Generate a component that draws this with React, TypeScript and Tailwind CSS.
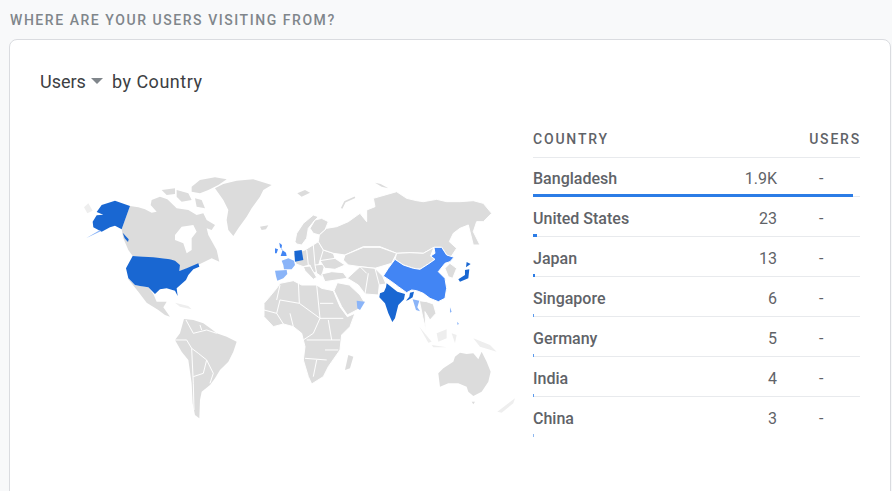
const rows = [
  { name: "Bangladesh", value: "1.9K", bar: "w-[320px] bg-[#2b7ce6]" },
  { name: "United States", value: "23", bar: "w-[4px] bg-[#2b7ce6]" },
  { name: "Japan", value: "13", bar: "w-[2px] bg-[#2b7ce6]" },
  { name: "Singapore", value: "6", bar: "w-[1px] bg-[#5b9bee]" },
  { name: "Germany", value: "5", bar: "w-[1px] bg-[#5b9bee]" },
  { name: "India", value: "4", bar: "w-[1px] bg-[#5b9bee]" },
  { name: "China", value: "3", bar: "w-[1px] bg-[#8fb9f0]" },
];

const gray = "#dcdcdc";
const pale = "#eeeeee";
const dark = "#1967d2";
const mid = "#4285f4";
const light = "#8ab4f8";

const WorldMap = () => (
  <svg width="490" height="270" viewBox="30 160 490 270" className="block">
    {/* americas: coords are in 3x space, origin 60,170 */}
    <g transform="translate(60 170) scale(0.3333)" stroke="#fff" strokeWidth="3" strokeLinejoin="round">
      <path fill={pale} stroke="none" d="M72 112L85 100L98 122L82 130Z" />
      <path fill={gray} stroke="none" d="M210 108L235 112L255 118L275 128L290 125L272 105L275 90L300 80L322 88L350 115L385 120L410 135L430 130L440 150L465 165L455 180L440 175L445 195L470 240L478 275L455 265L420 282L358 303L360 285L330 268L218 258L205 240L190 205L185 178Z" />
      <path fill={gray} stroke="none" d="M305 60L345 55L345 72L320 75ZM395 50L420 30L465 22L500 28L475 45L445 60L420 70L395 65ZM350 60L385 70L395 90L365 95L350 80ZM405 85L425 90L435 115L410 110Z" />
      <path fill="#fff" stroke="none" d="M345 195L365 170L400 165L410 185L395 205L395 240L380 250L370 220L345 210Z" />
      <path fill={gray} stroke="none" d="M465 55L490 42L530 32L580 28L635 45L610 60L600 80L575 115L560 140L535 175L520 198L505 180L500 150L505 120L490 90Z" />
      <path fill={gray} stroke="none" d="M600 170L625 166L618 178L605 180Z" />
      <path fill={gray} stroke="none" d="M200 322L225 345L265 352L280 372L290 395L320 395L310 412L330 440L315 435L295 420L260 398L235 365Z" />
      <path fill={pale} stroke="none" d="M345 398L385 408L395 418L360 410Z" />
      <path fill={gray} stroke="none" d="M372 447L400 450L430 460L455 478L470 490L500 500L530 515L520 545L505 575L480 600L465 625L450 645L425 665L420 690L418 745L405 735L398 700L395 640L385 570L365 545L345 510L360 490Z" />
      <path fill="none" d="M345 510L380 510L395 535L415 550L440 570L460 610L450 640M395 535L400 640L402 720M378 450L400 490L440 480L470 490M440 570L430 610L400 620M420 465L425 480" />
      <path fill={dark} stroke="none" d="M98 155L110 136L130 134L110 126L125 105L165 92L210 108L185 178L165 167L150 172L125 185L100 172Z" />
      <path fill={light} stroke="none" d="M78 205L120 180L122 184Z" />
      <path fill={dark} stroke="none" d="M218 258L250 260L280 262L330 268L345 272L360 285L358 303L380 295L415 280L418 290L400 298L385 315L378 330L350 355L353 378L345 362L320 355L300 358L285 372L265 352L240 348L225 345L205 325L198 295Z" />
      <path fill={dark} stroke="none" d="M188 188L206 208L204 216L194 205Z" />
    </g>
    {/* europe, africa, asia: 3x space, origin 260,170 */}
    <g transform="translate(260 170) scale(0.3333)" stroke="#fff" strokeWidth="3" strokeLinejoin="round">
      <path fill={gray} stroke="none" d="M112 70L135 60L150 68L125 80Z" />
      <path fill={gray} stroke="none" d="M345 38L362 42L385 55L365 50Z" />
      <path fill="none" stroke={gray} strokeWidth="5" d="M245 115L255 95L285 82" />
      <path fill={gray} d="M105 215L110 190L130 160L160 135L175 140L165 150L145 175L140 205L125 225L110 222Z" />
      <path fill={gray} d="M165 150L185 145L205 155L195 180L178 195L160 190L150 175Z" />
      <path fill={gray} d="M100 250L135 240L175 215L190 240L220 250L225 265L220 278L195 282L180 272L170 305L160 310L150 285L130 290L108 282Z" />
      <path fill={gray} d="M130 290L150 288L170 322L160 328L135 302Z" />
      <path fill={gray} d="M165 285L195 282L185 320L170 310Z" />
      <path fill={gray} d="M180 272L225 265L255 285L225 298L195 295Z" />
      <path fill="none" d="M140 240L145 285M160 225L165 285M190 240L180 272" />
      <path fill={gray} d="M178 195L200 175L230 170L265 155L300 130L320 155L320 120L345 110L340 85L375 75L410 65L440 85L470 92L490 95L530 88L560 95L600 95L640 92L670 100L695 130L670 155L650 155L640 185L660 225L640 225L625 165L600 175L580 190L568 215L590 235L570 265L560 255L545 232L522 232L490 250L450 248L410 250L385 240L360 230L310 230L255 255L220 250L190 240L175 215Z" />
      <path fill={gray} d="M255 255L310 232L360 232L410 250L395 280L345 295L300 290L265 285L250 270Z" />
      <path fill={gray} d="M410 250L450 248L490 250L522 232L512 258L525 268L505 282L480 298L460 295L430 285L405 268Z" />
      <path fill={gray} d="M570 280L590 295L578 325L565 320L555 295Z" />
      <path fill={gray} d="M185 312L215 305L250 308L262 325L195 335Z" />
      <path fill={gray} d="M262 325L300 290L345 295L368 318L378 342L358 345L355 375L315 372L295 345Z" />
      <path fill="none" d="M315 372L325 310M345 295L358 345M300 290L320 310" />
      <path fill={gray} d="M222 362L232 338L268 345L300 375L312 395L300 415L262 435L245 410Z" />
      <path fill={gray} d="M12 400L25 385L50 355L60 340L100 332L125 345L170 345L185 355L220 362L240 410L262 440L285 430L270 470L245 495L240 540L205 590L190 620L155 642L145 620L130 570L135 530L125 490L100 470L70 462L40 470L12 440Z" />
      <path fill="none" d="M115 335L118 400L60 390L50 430L70 462M170 345L180 445L118 400M220 400L180 400M250 445L180 445L160 490L130 510M140 510L240 510M135 565L200 570M170 570L160 620M60 345L50 390M12 420L50 430M90 430L100 470M205 450L215 510M235 540L195 540" />
      <path fill={gray} stroke="none" d="M265 555L280 560L270 595L255 600Z" />
      <path fill={gray} d="M478 392L500 395L520 402L528 430L510 450L495 425L498 480L488 440Z" />
      <path fill={pale} stroke="none" d="M478 470L515 515L505 518ZM530 490L560 478L560 505L535 515ZM515 525L560 532L520 532ZM575 490L590 495L585 520ZM640 505L690 525L710 545L660 530Z" />
      <path fill={gray} stroke="none" d="M535 610L550 595L580 575L585 560L600 548L620 552L640 550L655 568L665 545L680 575L692 605L685 635L665 665L640 678L625 665L620 650L595 640L565 640L540 650Z" />
      <path fill={gray} stroke="none" d="M635 695L645 695L640 703Z" />
      <path fill={pale} stroke="none" d="M712 725L765 685L760 700L725 728Z" />
      <path fill={mid} d="M522 232L545 232L560 255L582 262L570 275L555 280L535 305L555 325L560 355L555 385L535 395L510 385L490 370L470 362L455 360L440 368L415 350L395 335L370 318L385 295L405 268L430 285L460 295L480 298L505 282L525 268L512 258L525 250Z" />
      <path fill={dark} stroke="none" d="M380 340L395 352L412 365L435 372L432 388L415 405L405 445L397 456L385 430L375 400L358 382L360 370L372 365L378 352Z" />
      <path fill={dark} stroke="none" d="M450 368L462 365L458 382L445 390L438 392L448 380Z" />
      <path fill={light} stroke="none" d="M458 388L478 392L472 412L480 424L468 420Z" />
      <path fill={light} stroke="none" d="M290 392L315 395L300 420L292 415Z" />
      <path fill={dark} stroke="none" d="M620 276L632 282L618 292ZM615 300L628 298L625 325L600 335L595 328L615 315Z" />
      <path fill={light} stroke="none" d="M570 412L575 425L570 428ZM592 455L597 462L592 464Z" />
      <path fill={mid} stroke="none" d="M58 218L66 225L64 238L78 248L80 258L62 258L68 240L60 232ZM45 235L54 238L50 250L45 250Z" />
      <path fill={dark} stroke="none" d="M103 243L125 240L130 270L105 275Z" />
      <path fill={light} stroke="none" d="M65 272L85 265L102 272L105 285L95 298L72 298L70 285Z" />
      <path fill={light} stroke="none" d="M45 302L80 300L82 312L70 325L52 332L48 318Z" />
    </g>
  </svg>
);

const App = () => {
  return (
    <div className="w-[892px] h-[491px] overflow-hidden bg-[#f8f9fa] font-['Roboto',sans-serif]">
      <h2 className="h-[39px] pl-[10px] pt-[11px] text-[14px] leading-[18px] font-medium tracking-[1.55px] uppercase text-[#80868b]">
        Where are your users visiting from?
      </h2>
      <div className="ml-[9px] w-[882px] h-[500px] bg-white border border-[#dadce0] rounded-t-[8px] pt-[28px]">
        <div className="pl-[30px] flex items-center h-[26px] text-[18px] text-[#3c4043]">
          <span>Users</span>
          <span className="ml-[5px] mr-[9px] w-0 h-0 border-x-[6px] border-x-transparent border-t-[6px] border-t-[#80868b]" />
          <span className="tracking-[0.5px]">by Country</span>
        </div>
        <div className="flex mt-[27px]">
          <div className="w-[493px] pl-[20px] pt-[39px]">
            <WorldMap />
          </div>
          <div className="w-[327px] ml-[30px]">
            <div className="flex justify-between items-center h-[37px] border-b border-[#e8eaed] text-[14px] font-medium tracking-[1.8px] text-[#5f6368]">
              <span>COUNTRY</span>
              <span className="-mr-[1px]">USERS</span>
            </div>
            <div className="-mt-px">
              {rows.map((row, i) => (
                <div key={row.name} className={`relative flex items-center h-[40px] pt-[4px] border-b text-[16px] text-[#5f6368] ${i < rows.length - 1 ? "border-[#e8eaed]" : "border-transparent"}`}>
                  <span className="font-medium flex-1">{row.name}</span>
                  <span className="w-[50px] text-right">{row.value}</span>
                  <span className="w-[83px] pl-[42px]">-</span>
                  <div className={`absolute left-0 bottom-[-1px] h-[3px] ${row.bar}`} />
                </div>
              ))}
            </div>
          </div>
        </div>
      </div>
    </div>
  );
};

export default App;
